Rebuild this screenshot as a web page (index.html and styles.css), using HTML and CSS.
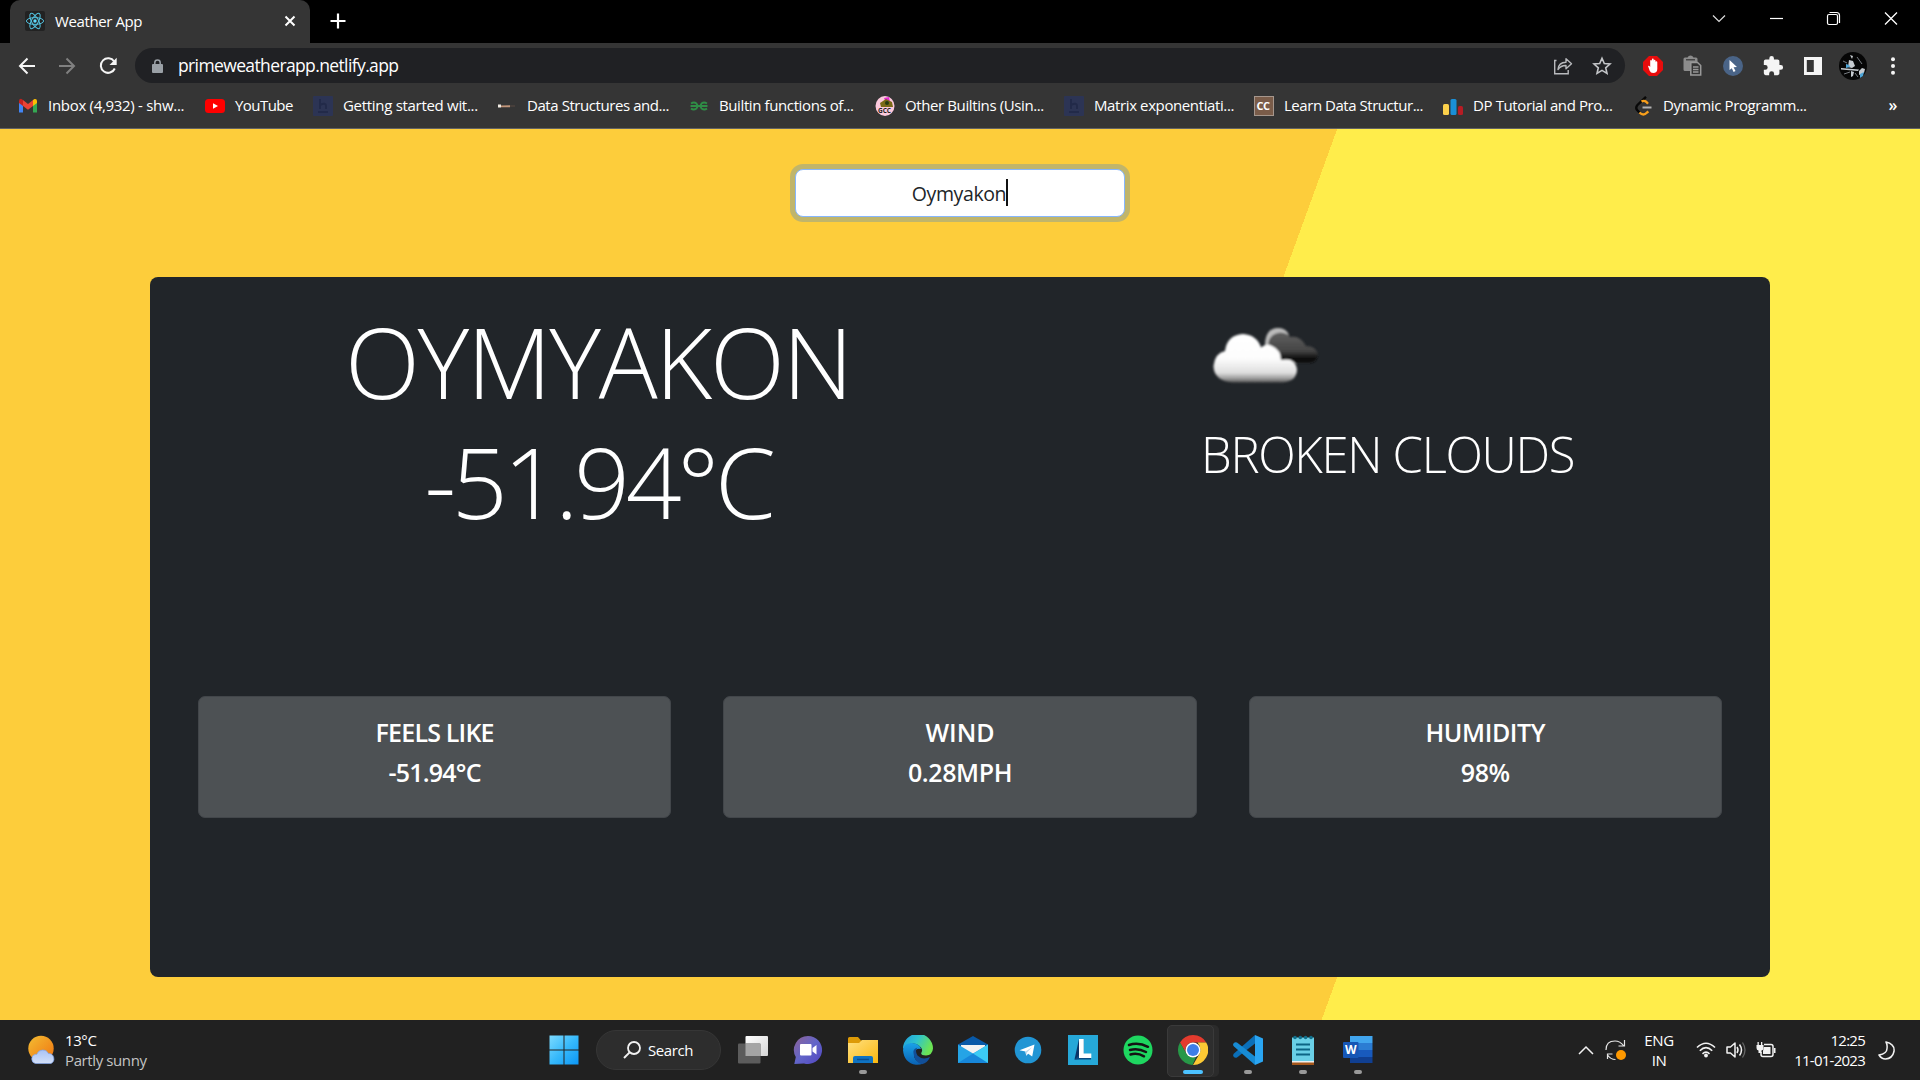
FILE: index.html
```html
<!DOCTYPE html>
<html lang="en">
<head>
<meta charset="utf-8">
<title>Weather App</title>
<link rel="stylesheet" href="styles.css">
</head>
<body>
<header class="browser">
  <div class="tabstrip">
    <div class="tab">
      <svg class="favicon" width="20" height="20" viewBox="0 0 20 20"><rect width="20" height="20" rx="2" fill="#222"/><g fill="none" stroke="#53c1de" stroke-width="1"><ellipse cx="10" cy="10" rx="8.6" ry="3.4"/><ellipse cx="10" cy="10" rx="8.6" ry="3.4" transform="rotate(60 10 10)"/><ellipse cx="10" cy="10" rx="8.6" ry="3.4" transform="rotate(120 10 10)"/></g><circle cx="10" cy="10" r="1.7" fill="#61dafb"/></svg>
      <span class="tab-title">Weather App</span>
      <svg class="tab-close" width="12" height="12" viewBox="0 0 12 12"><path d="M1.500 1.500l9 9M10.500 1.500l-9 9" stroke="#fff" stroke-width="2"/></svg>
    </div>
    <svg class="newtab" width="16" height="16" viewBox="0 0 16 16"><path d="M8 .5v15M.5 8h15" stroke="#fff" stroke-width="2.200"/></svg>
    <div class="winctl">
      <svg width="58" height="38" viewBox="0 0 58 38"><path d="M23 15.500l6 6 6-6" fill="none" stroke="#ddd" stroke-width="1.200"/></svg>
      <svg width="57" height="38" viewBox="0 0 57 38"><path d="M22 18.500h13" stroke="#fff" stroke-width="1.200"/></svg>
      <svg width="57" height="38" viewBox="0 0 57 38"><rect x="22.500" y="14.500" width="10" height="10" rx="1.500" fill="none" stroke="#fff" stroke-width="1.200"/><path d="M24.500 12.500h7q3 0 3 3v7.500" fill="none" stroke="#fff" stroke-width="1.200"/></svg>
      <svg width="58" height="38" viewBox="0 0 58 38"><path d="M23 12.500l12 12M35 12.500l-12 12" stroke="#fff" stroke-width="1.300"/></svg>
    </div>
  </div>
  <div class="toolbar">
    <svg width="40" height="44" viewBox="0 0 40 44"><path d="M28 22H13.500M20.500 14.500L13 22l7.500 7.500" fill="none" stroke="#f5f5f5" stroke-width="2"/></svg>
    <svg width="40" height="44" viewBox="0 0 40 44"><path d="M12 22h14.500M19.500 14.500L27 22l-7.500 7.500" fill="none" stroke="#808080" stroke-width="2"/></svg>
    <svg width="48" height="44" viewBox="0 0 48 44"><g transform="translate(-7 0)"><path d="M34.200 17.500A7.300 7.300 0 1 0 34.800 24.500" fill="none" stroke="#f5f5f5" stroke-width="2"/><path d="M36.700 13.800v7.200h-7.200z" fill="#f5f5f5"/></g></svg>
    <div class="omnibox">
      <svg width="11" height="14" viewBox="0 0 11 14"><rect y="5" width="11" height="9" rx="1" fill="#9aa0a6"/><path d="M2.800 6V3.700a2.700 2.700 0 0 1 5.400 0V6" fill="none" stroke="#9aa0a6" stroke-width="1.500"/></svg>
      <span class="url">primeweatherapp.netlify.app</span>
      <svg width="20" height="20" viewBox="0 0 20 20"><path d="M3.500 4.500H1.700v13.300h13.500V14" fill="none" stroke="#b8babd" stroke-width="1.400"/><path d="M5 13.500q.6-7.300 8-7.300V2.800l5.500 5-5.500 5V9.500Q8 9.300 5 13.500z" fill="none" stroke="#b8babd" stroke-width="1.400" stroke-linejoin="round"/></svg>
      <svg class="star" width="20" height="20" viewBox="0 0 20 20"><path d="M10 2.200l2.300 5.300 5.700.5-4.300 3.800 1.300 5.600-5-3-5 3 1.300-5.600L2 8l5.700-.5z" fill="none" stroke="#c3c5c8" stroke-width="1.600"/></svg>
    </div>
    <div class="ext">
      <svg width="22" height="22" viewBox="0 0 22 22"><path d="M7 1h8l6 6v8l-6 6H7l-6-6V7z" fill="#e80c0c"/><path d="M6 11q1-1 2.200 1V6q0-1 .8-1t.9 1V4.500q0-1 .9-1t.9 1V6q0-1.200.9-1.200t.9 1.200v1.200q0-1 .9-1t.9 1V14q0 4-4.200 4-2.500 0-3.400-2.300z" fill="#fff"/></svg>
      <svg width="22" height="22" viewBox="0 0 22 22"><path d="M3 2.500h2.500Q6.500.5 8.500.5t3 2H14q1.500 0 1.500 1.500v3H8.500v9H3Q1.500 16 1.500 14.500V4Q1.500 2.500 3 2.500z" fill="#8c8c8c"/><path d="M4 4.800h9" stroke="#353535" stroke-width="1.200"/><path d="M8.800 7.500h6.700l3.200 3v9.500H8.800z" fill="#353535" stroke="#999" stroke-width="1.500"/><path d="M11 12h5.500M11 14.500h5.500M11 17h5.500" stroke="#999" stroke-width="1.300"/></svg>
      <svg width="22" height="22" viewBox="0 0 22 22"><circle cx="11" cy="11" r="10" fill="#4a6487"/><path d="M7.500 5l7.500 7-3.400.3 1.900 3.700-1.900 1-1.800-3.800L7.500 15z" fill="#fff"/></svg>
      <svg width="22" height="22" viewBox="0 0 24 24"><path d="M20.500 11H19V7a2 2 0 0 0-2-2h-4V3.500a2.500 2.500 0 0 0-5 0V5H4a2 2 0 0 0-2 2v3.800h1.500a2.700 2.700 0 0 1 0 5.400H2V20a2 2 0 0 0 2 2h3.800v-1.500a2.700 2.700 0 0 1 5.400 0V22H17a2 2 0 0 0 2-2v-4h1.500a2.500 2.500 0 0 0 0-5z" fill="#f5f5f5"/></svg>
      <svg width="22" height="22" viewBox="0 0 22 22"><path d="M2 2h18v18H2zM4.800 5v12h7V5z" fill="#f5f5f5" fill-rule="evenodd"/></svg>
      <svg width="28" height="28" viewBox="0 0 28 28"><circle cx="14" cy="14" r="14" fill="#060606"/><path d="M11 3l3 1-1 3zM10 8l4 1 2 5-3 2-4-1zM2 16l18 1.500-1 1.500-17-1.500zM12 19l3 1-1 4-2 1zM18 5l4 5M23 16l3 1-1 4-5 2v-4z" fill="#c6cbd0"/><path d="M18 5l5 7M4 9l4 2M5 22l6-2M16 21l3 4" stroke="#777c82" fill="none"/><path d="M7 12l3 1 1 2-4 1zM21 22l4-2-1 4-3 2z" fill="#4fa6d8"/></svg>
      <svg width="22" height="22" viewBox="0 0 22 22"><g fill="#f5f5f5"><circle cx="11" cy="4.300" r="2"/><circle cx="11" cy="11" r="2"/><circle cx="11" cy="17.700" r="2"/></g></svg>
    </div>
  </div>
  <nav class="bookmarks">
    <div class="bm b1"><svg width="20" height="20" viewBox="0 0 20 20"><path d="M1 5v11.500h4V9z" fill="#4285f4"/><path d="M15 9v7.500h4V5z" fill="#34a853"/><path d="M1 5q0-2.200 2-2.200L5 4v6L1 7z" fill="#c5221f"/><path d="M5 4l5 4 5-4v6l-5 3.800L5 10z" fill="#ea4335"/><path d="M15 4l1.500-1q2.500-.5 2.500 2v2l-4 3z" fill="#fbbc04"/></svg><span>Inbox (4,932) - shw...</span></div>
    <div class="bm b2"><svg width="20" height="20" viewBox="0 0 20 20"><rect y="3" width="20" height="14" rx="3.500" fill="#f00"/><path d="M8 7.200v5.600l5-2.800z" fill="#fff"/></svg><span>YouTube</span></div>
    <div class="bm b3"><svg width="20" height="20" viewBox="0 0 20 20"><rect width="20" height="20" rx="1" fill="#2c3454"/><path d="M7 3v10M7 9q6-3 6 1v3M5 16h10" fill="none" stroke="#222a49" stroke-width="2"/></svg><span>Getting started wit...</span></div>
    <div class="bm b4"><svg width="20" height="20" viewBox="0 0 20 20"><path d="M1 8.500h3v3H1z" fill="#f2ede5"/><path d="M4 9.500l9-.3v2H4z" fill="#c1957a"/><path d="M13 10h5" stroke="#5b4a42"/></svg><span>Data Structures and...</span></div>
    <div class="bm b5"><svg width="20" height="20" viewBox="0 0 20 20"><path d="M2 7.500Q5 5.500 7.500 7.500q2 2.500 0 5-3 2-5.500 0M1.500 10h17M18 7.500q-3-2-5.500 0-2 2.500 0 5 3 2 5.500 0" fill="none" stroke="#2f8d46" stroke-width="1.800"/></svg><span>Builtin functions of...</span></div>
    <div class="bm b6"><svg width="20" height="20" viewBox="0 0 20 20"><ellipse cx="10" cy="10" rx="9.500" ry="10" fill="#fbc9dc"/><path d="M9 2l5-1 1 5-4 1z" fill="#e52bd1"/><path d="M5 7l6-4 6 3 1 5H6z" fill="#7a6a17"/><circle cx="12" cy="7" r="2" fill="#263a12"/><text x="3" y="17" class="gcc">GCC</text></svg><span>Other Builtins (Usin...</span></div>
    <div class="bm b7"><svg width="20" height="20" viewBox="0 0 20 20"><rect width="20" height="20" rx="1" fill="#2c3454"/><path d="M7 3v10M7 9q6-3 6 1v3M5 16h10" fill="none" stroke="#222a49" stroke-width="2"/></svg><span>Matrix exponentiati...</span></div>
    <div class="bm b8"><svg width="20" height="20" viewBox="0 0 20 20"><rect x=".5" y=".5" width="19" height="19" fill="#7a5c49" stroke="#a5968c"/><text x="2.500" y="13.500" class="cc">CC</text></svg><span>Learn Data Structur...</span></div>
    <div class="bm b9"><svg width="20" height="20" viewBox="0 0 20 20"><rect y="8" width="6" height="11" rx="1.500" fill="#fbd04b"/><rect x="7.500" y="3" width="6" height="16" rx="1.500" fill="#1a8fd6"/><rect x="15" y="10" width="5" height="9" rx="1.500" fill="#b71c24"/></svg><span>DP Tutorial and Pro...</span></div>
    <div class="bm b10"><svg width="20" height="20" viewBox="0 0 20 20"><path d="M13 .8L4.500 9Q2 12 4.500 14.500l2 2" fill="none" stroke="#080808" stroke-width="2.400"/><path d="M8.500 5.500q2.500-1.500 5 .5l1.500 1.700M6.500 16.500q4 4 7.500 0l1.300-1.200" fill="none" stroke="#f89f1b" stroke-width="2.400"/><path d="M9.500 11.500h9" stroke="#b3b3b3" stroke-width="2"/></svg><span>Dynamic Programm...</span></div>
    <span class="more">»</span>
  </nav>
</header>

<main class="page">
  <div class="search"><span>Oymyakon</span><i class="caret"></i></div>
  <section class="card">
    <div class="summary">
      <div class="place">
        <h1>OYMYAKON</h1>
        <h1 class="temp">-51.94°C</h1>
      </div>
      <div class="cond">
        <svg class="clouds" width="125" height="125" viewBox="0 0 125 125">
          <defs>
            <linearGradient id="lite" x1="0" y1="0" x2="0" y2="1"><stop offset="0" stop-color="#fff"/><stop offset=".5" stop-color="#fdfdfd"/><stop offset=".8" stop-color="#dedede"/><stop offset=".92" stop-color="#999"/><stop offset="1" stop-color="#555"/></linearGradient>
            <linearGradient id="dark" x1="0" y1="0" x2="0" y2="1"><stop offset="0" stop-color="#666"/><stop offset=".65" stop-color="#454545"/><stop offset=".9" stop-color="#080808"/><stop offset="1" stop-color="#161616"/></linearGradient>
            <filter id="soft"><feGaussianBlur stdDeviation=".8"/></filter>
          </defs>
          <g filter="url(#soft)">
            <path d="M63 53C61 42 67 34 75 34Q83 34 87 43Q97 41 103 52Q113 52 114.500 60Q115 68 107 69H80Q68 66 63 53z" fill="url(#dark)"/>
            <path d="M62 52Q62 34 75 34q8 0 11 7-9-5-16 0-5 4-4.500 10z" fill="#bbb"/>
            <path d="M22 57Q24 41 40 40Q54 41 58 53.500Q63 49 69 52Q78 56 78 66Q92 63 94 75Q94 87 80 88.500H30Q11 87 10.500 72Q12 59 22 57z" fill="url(#lite)"/>
          </g>
        </svg>
        <h2>BROKEN CLOUDS</h2>
      </div>
    </div>
    <div class="stats">
      <div class="stat"><span class="tight">FEELS LIKE</span><span class="tight">-51.94°C</span></div>
      <div class="stat"><span>WIND</span><span class="snug">0.28MPH</span></div>
      <div class="stat"><span class="snug">HUMIDITY</span><span class="snug">98%</span></div>
    </div>
  </section>
</main>

<footer class="taskbar">
  <div class="weather">
    <svg width="30" height="30" viewBox="0 0 30 30"><defs><linearGradient id="sun" x1="0" y1="0" x2="1" y2="1"><stop offset="0" stop-color="#f3bd33"/><stop offset="1" stop-color="#f0730f"/></linearGradient><linearGradient id="cl" x1="0" y1="0" x2="0" y2="1"><stop offset="0" stop-color="#a9c3f5"/><stop offset="1" stop-color="#d3e0f8"/></linearGradient></defs><circle cx="14" cy="13.500" r="12.700" fill="url(#sun)"/><path d="M8.500 28.500a4.700 4.700 0 0 1 0-9.200h1.300a6.300 6.300 0 0 1 11.600-.8 5.300 5.300 0 0 1 2.600 10z" fill="url(#cl)" stroke="#7fa2e6" stroke-width=".7"/></svg>
    <div class="lines"><span>13°C</span><span class="dim">Partly sunny</span></div>
  </div>
  <div class="apps">
    <div class="app"><svg width="30" height="30" viewBox="0 0 30 30"><defs><linearGradient id="win" gradientUnits="userSpaceOnUse" x1="0" y1="0" x2="30" y2="30"><stop offset="0" stop-color="#7fdcff"/><stop offset=".5" stop-color="#37b9fb"/><stop offset="1" stop-color="#0a95f5"/></linearGradient></defs><path d="M.5.500h14v14H.5zM15.500.5h14v14h-14zM.5 15.500h14v14H.5zM15.500 15.500h14v14h-14z" fill="url(#win)"/></svg></div>
    <div class="find"><svg width="18" height="18" viewBox="0 0 18 18"><circle cx="11" cy="7" r="6" fill="none" stroke="#f2f2f2" stroke-width="1.800"/><path d="M6.600 11.400L1 17" stroke="#f2f2f2" stroke-width="2"/></svg><span>Search</span></div>
    <div class="app"><svg width="30" height="30" viewBox="0 0 30 30"><defs><linearGradient id="tvw" x1="0" y1="0" x2="1" y2="1"><stop offset="0" stop-color="#fff"/><stop offset="1" stop-color="#d5d5d5"/></linearGradient></defs><rect x="7.500" y="1" width="22.500" height="20" rx="1" fill="url(#tvw)"/><rect y="8.500" width="22.500" height="20" rx="1" fill="#5c5c5c"/><rect x="7.500" y="8.500" width="15" height="12.500" fill="#a5a5a5"/></svg></div>
    <div class="app"><svg width="30" height="30" viewBox="0 0 30 30"><defs><linearGradient id="chat" x1="0" y1="0" x2="1" y2="1"><stop offset="0" stop-color="#8f6395"/><stop offset=".5" stop-color="#6265c9"/><stop offset="1" stop-color="#5145c0"/></linearGradient></defs><path d="M15 1a14 14 0 1 1-4 27.400L1.300 29l1.500-7A14 14 0 0 1 15 1z" fill="url(#chat)"/><rect x="7" y="9" width="11.500" height="11.500" rx="1" fill="#fff"/><path d="M19.500 13l4-3v9.500l-4-3z" fill="#fff"/></svg></div>
    <div class="app run"><svg width="30" height="30" viewBox="0 0 30 30"><defs><linearGradient id="fold" x1="0" y1="0" x2="1" y2="1"><stop offset="0" stop-color="#ffe080"/><stop offset="1" stop-color="#fbb80f"/></linearGradient></defs><path d="M0 3.500Q0 2 1.500 2H10l3 3.500h17V14H0z" fill="#dd9a07"/><path d="M0 8h11l3-3h16v23H0z" fill="url(#fold)"/><path d="M5 28v-5q0-2 2-2h16q2 0 2 2v5z" fill="#0f73c2"/><path d="M9 24.500h12" stroke="#084e90" stroke-width="1.500"/></svg></div>
    <div class="app"><svg width="30" height="30" viewBox="0 0 30 30"><defs><linearGradient id="e1" x1="0" y1="0" x2="1" y2=".4"><stop offset="0" stop-color="#1d9ae0"/><stop offset=".5" stop-color="#2fc3cd"/><stop offset="1" stop-color="#6be454"/></linearGradient><linearGradient id="e2" x1="0" y1="0" x2="0" y2="1"><stop offset="0" stop-color="#1aa2e8"/><stop offset="1" stop-color="#0a62b4"/></linearGradient></defs><path d="M0 14A15 15 0 0 1 30 13.500Q29.500 20 23 20.500q-6 0-4.500-3 1.500-2.500-.5-5Q10 4 0 14z" fill="url(#e1)"/><path d="M0 15Q1 8 8.500 8q8 .5 9.500 6-5-1.500-7 4-1 8 9 10.500-3 1.500-7 1.300Q1 28 0 15z" fill="url(#e2)"/><path d="M10.500 18q-1-4 4-5.500-3 3 0 8 5 5 12.500 1.500Q24.500 28 19 29.200 11 27 10.500 18z" fill="#124f98"/></svg></div>
    <div class="app"><svg width="30" height="30" viewBox="0 0 30 30"><path d="M0 9.500L15 1l15 8.500V20H0z" fill="#0859a8"/><path d="M3 10h24v10H3z" fill="#f2f2f2"/><path d="M0 9.500l15 9L30 9.500V28H0z" fill="#25a4e6"/><path d="M30 9.500L11 21.500 22 28h8z" fill="#3ccbf4"/><path d="M0 28l15-9.500L30 28z" fill="#1787da"/></svg></div>
    <div class="app"><svg width="30" height="30" viewBox="0 0 30 30"><circle cx="15" cy="15" r="13.300" fill="#2195d4"/><path d="M6.500 15.300L21.500 9.500l-2.300 12-4-2.800-2 2-.8-4.200z" fill="#fff"/><path d="M12.500 16.500l6.500-4.300-5 5.200-.8 3.300z" fill="#bcd9ec"/></svg></div>
    <div class="app"><svg width="30" height="30" viewBox="0 0 30 30"><rect width="30" height="30" fill="#26a8d8"/><path d="M11 4L6.500 24.500l5-.5z" fill="#0b3466"/><path d="M11 4h4.500v16H23v4.500H6.500L11 20z" fill="#0b4a80"/><path d="M11 4h4.700v14.500h7.600v4.500H11z" fill="#fff"/></svg></div>
    <div class="app"><svg width="30" height="30" viewBox="0 0 30 30"><circle cx="15" cy="15" r="14.500" fill="#1ed760"/><path d="M6 10q9.500-3 19 1.800M7 15q8-2.300 16 2M7.500 19.500q7-2 13.500 1.800" fill="none" stroke="#141414" stroke-width="2.500" stroke-linecap="round"/></svg></div>
    <div class="app active"><svg width="30" height="30" viewBox="0 0 30 30"><path d="M15 0Q24 0 28.200 7.500H15A7.500 7.500 0 0 0 8.500 18.800L2 7.500Q6.500 0 15 0z" fill="#e33b2e"/><path d="M28.200 7.500A15 15 0 0 1 15 30l6.500-11.200Q24 13 19.500 7.500z" fill="#fcc934"/><path d="M2 7.500l6.500 11.300Q12 23.500 18 22l-3.500 8A15 15 0 0 1 2 7.500z" fill="#279847"/><circle cx="15" cy="15" r="7.500" fill="#fff"/><circle cx="15" cy="15" r="6" fill="#3e7ee8"/></svg></div>
    <div class="app run"><svg width="30" height="30" viewBox="0 0 30 30"><path d="M22 0l8 3.500v23L22 30z" fill="#2aa5f2"/><path d="M22 0v8.500L4 22.500Q2 23.500.5 21.500q-1-1.500.5-3z" fill="#0b6fb8"/><path d="M22 30v-8.500L4 7.500Q2 6.500.5 8.500q-1 1.500.5 3z" fill="#178bd4"/></svg></div>
    <div class="app run"><svg width="30" height="30" viewBox="0 0 30 30"><path d="M4 26h22v4H4z" fill="#a4561a"/><path d="M4 25h22v2.500H4z" fill="#eee"/><path d="M4 2.500h22V26H4z" fill="#69cfe6"/><path d="M8 9.500h14M8 14.500h14M8 19.500h14" stroke="#0c6484" stroke-width="1.800"/><g fill="#116f8c"><circle cx="7" cy="2.500" r="1.800"/><circle cx="12.300" cy="2.500" r="1.800"/><circle cx="17.600" cy="2.500" r="1.800"/><circle cx="23" cy="2.500" r="1.800"/></g></svg></div>
    <div class="app run"><svg width="30" height="30" viewBox="0 0 30 30"><path d="M7 1h22.500v7H7z" fill="#41a5ee"/><path d="M7 8h22.500v7H7z" fill="#2b7cd3"/><path d="M7 15h22.500v7H7z" fill="#185abd"/><path d="M7 22h22.500v6H7z" fill="#103f91"/><rect y="7" width="15.500" height="16" rx="1" fill="#1656b5"/><text x="2" y="19" class="word">W</text></svg></div>
  </div>
  <div class="tray">
    <svg width="16" height="10" viewBox="0 0 16 10"><path d="M1 9l7-7 7 7" fill="none" stroke="#f2f2f2" stroke-width="1.500"/></svg>
    <svg class="sync" width="22" height="22" viewBox="0 0 22 22"><path d="M1 11Q1 2 10 2q5 0 8.500 4.500M19.500 1v6h-6M2.500 20v-5h5M2.500 16q3 4.500 8 4.500" fill="none" stroke="#e6e6e6" stroke-width="1.200"/><circle cx="16" cy="16" r="5" fill="#f90"/></svg>
    <div class="lang"><span>ENG</span><span>IN</span></div>
    <svg class="wifi" width="20" height="16" viewBox="0 0 20 16"><path d="M1 5.500q9-8.500 18 0M3.800 8.700q6.200-6 12.400 0M6.500 11.800q3.500-3.300 7 0" fill="none" stroke="#f2f2f2" stroke-width="1.600"/><circle cx="10" cy="13.500" r="1.900" fill="#f2f2f2"/></svg>
    <svg class="vol" width="20" height="18" viewBox="0 0 20 18"><path d="M1 6h3.500L9 2v14l-4.500-4H1z" fill="none" stroke="#f2f2f2" stroke-width="1.500" stroke-linejoin="round"/><path d="M11 6q2 3 0 6M13.500 3.500q4 5.500 0 11" fill="none" stroke="#f2f2f2" stroke-width="1.500"/><path d="M16.500 1.500q5 7.500 0 15" fill="none" stroke="#666" stroke-width="1.300"/></svg>
    <svg class="bat" width="20" height="18" viewBox="0 0 20 18"><path d="M8 3.500h7q2 0 2 2v8q0 2-2 2H7q-2 0-2-2V11" fill="none" stroke="#f2f2f2" stroke-width="1.500"/><path d="M8 6h6.500v7H7v-3zM18 7h1.500v5H18zM.5 4h7v3q0 2-2 2.500V12h-3V9.500Q.5 9 .5 7zM1.500 1h1.300v3H1.500zM5 1h1.300v3H5z" fill="#f2f2f2"/></svg>
    <div class="clock"><span>12:25</span><span>11-01-2023</span></div>
    <svg class="moon" width="17" height="19" viewBox="0 0 17 19"><path d="M8 1q9 2 8 9.500-1.500 7-8.500 7.500-4 0-6.500-4 8-1.500 8-6.500Q9.500 3.500 8 1z" fill="none" stroke="#f2f2f2" stroke-width="1.500" stroke-linejoin="round"/></svg>
  </div>
</footer>
</body>
</html>
```
FILE: styles.css
```css
* { box-sizing: border-box; }
body {
  margin: 0;
  width: 1920px;
  height: 1080px;
  overflow: hidden;
  display: flex;
  flex-direction: column;
  font-family: "Open Sans", "Noto Sans", sans-serif;
  font-size: 15px;
  letter-spacing: -.39px;
  white-space: nowrap;
  color: #fff;
}
svg { display: block; flex: none; }

.browser { height: 129px; background: #353535; border-bottom: 1px solid #626262; }
.tabstrip { height: 43px; background: #000; display: flex; }
.tab { width: 300px; margin-left: 10px; background: #353535; border-radius: 10px 10px 0 0; display: flex; align-items: center; padding: 0 14px 2px 15px; }
.tab-title { margin-left: 10px; flex: 1; }
.newtab { margin: 13px 0 0 20px; }
.winctl { margin-left: auto; display: flex; }
.toolbar { height: 45px; display: flex; align-items: center; padding-left: 7px; }
.omnibox { width: 1490px; height: 35px; border-radius: 18px; background: #202124; display: flex; align-items: center; padding: 0 13px 0 17px; }
.url { flex: 1; margin-left: 15px; padding-bottom: 1px; font-size: 17.5px; letter-spacing: -.62px; }
.star { margin-left: 19px; }
.ext { display: flex; align-items: center; margin-left: 8px; }
.ext svg { margin: 0 9px; }
.ext svg:nth-child(6) { margin: 0 6px; }
.bookmarks { height: 40px; display: flex; align-items: center; padding: 0 23px 4px 18px; }
.bm { display: flex; align-items: center; gap: 10px; flex: none; }
.bm span { padding-bottom: 2px; }
.b1 { width: 187px; letter-spacing: -.3px; }
.b2 { width: 108px; letter-spacing: -.55px; }
.b3 { width: 184px; letter-spacing: -.3px; }
.b4 { width: 192px; letter-spacing: -.43px; }
.b5 { width: 186px; }
.b6 { width: 189px; }
.b7 { width: 190px; }
.b8 { width: 189px; letter-spacing: -.46px; }
.b9 { width: 190px; }
.b10 { width: 180px; }
.more { margin-left: auto; padding-bottom: 3px; font-size: 16px; font-weight: 600; }
.gcc { font: bold 6.500px "Open Sans", sans-serif; fill: #222; letter-spacing: 0; }
.cc { font: bold 11px "Open Sans", sans-serif; fill: #fff; letter-spacing: -.5px; }
.word { font: bold 12px "Open Sans", sans-serif; fill: #fff; letter-spacing: 0; }

.page { height: 891px; background: linear-gradient(110deg, #fdcd3b 60%, #ffed4b 60%) 0 0 / 1920px 848px; padding-top: 40px; }
.search { width: 330px; height: 48px; margin: 0 auto 60px; border: 1px solid #86b7fe; border-radius: 8px; background: #fff; box-shadow: 0 0 0 5px rgba(13, 110, 253, .25); display: flex; align-items: center; justify-content: center; color: #212529; font-size: 19.500px; letter-spacing: -.4px; }
.caret { width: 2px; height: 27px; background: #111; margin-top: -2px; }
.card { width: 1620px; height: 700px; margin: 0 auto; border-radius: 8px; background: #212529; padding: 24px 48px 0; }
.summary { display: flex; height: 395px; }
.place { width: 800px; text-align: center; }
h1, h2 { margin: 0; font-weight: 300; }
h1 { font-size: 98px; line-height: 120px; letter-spacing: -2.300px; }
.temp { letter-spacing: -4.300px; }
.cond { padding-left: 203px; }
.clouds { margin: -7px 0 5px 2px; }
h2 { font-size: 49px; line-height: 60px; letter-spacing: -1.330px; }
.stats { display: grid; grid-template-columns: repeat(3, 1fr); gap: 52px; }
.stat { height: 122px; background: #4d5154; border: 1px solid #42464a; border-radius: 7px; display: flex; flex-direction: column; align-items: center; padding-top: 15px; font-size: 25px; font-weight: 600; line-height: 40px; letter-spacing: 0; }
.tight { letter-spacing: -.8px; }
.snug { letter-spacing: -.4px; }

.taskbar { height: 60px; background: #212121; display: flex; align-items: center; }
.weather { width: 536px; padding-left: 27px; display: flex; align-items: center; gap: 8px; }
.lines, .lang, .clock { display: flex; flex-direction: column; line-height: 20px; }
.dim { color: #c4c4c4; }
.apps { display: flex; align-items: center; }
.app { width: 55px; height: 60px; display: flex; align-items: center; justify-content: center; position: relative; }
.find { width: 125px; height: 40px; margin: 0 4.500px; border-radius: 20px; background: #2d2d2d; border: 1px solid #363636; display: flex; align-items: center; justify-content: center; gap: 7px; }
.run::after, .active::after { content: ""; position: absolute; bottom: 6px; left: 23.500px; width: 8px; height: 4px; border-radius: 2px; background: #999; }
.active::after { left: 17.500px; width: 20px; background: #4cc2ff; }
.active::before { content: ""; position: absolute; left: 2px; top: 5px; width: 45px; height: 50px; border-radius: 5px; background: #2e2e2e; border: 1px solid #3a3a3a; box-shadow: 5px 0 0 #2b2b2b; }
.active svg { position: relative; }
.tray { margin-left: auto; display: flex; align-items: center; padding-right: 25px; }
.sync { margin-left: 11px; }
.lang { width: 40px; margin-left: 12px; align-items: center; }
.wifi { margin-left: 17px; }
.vol { margin-left: 10px; }
.bat { margin-left: 10px; }
.clock { width: 89px; align-items: flex-end; letter-spacing: -.75px; }
.moon { margin-left: 13px; }
```
